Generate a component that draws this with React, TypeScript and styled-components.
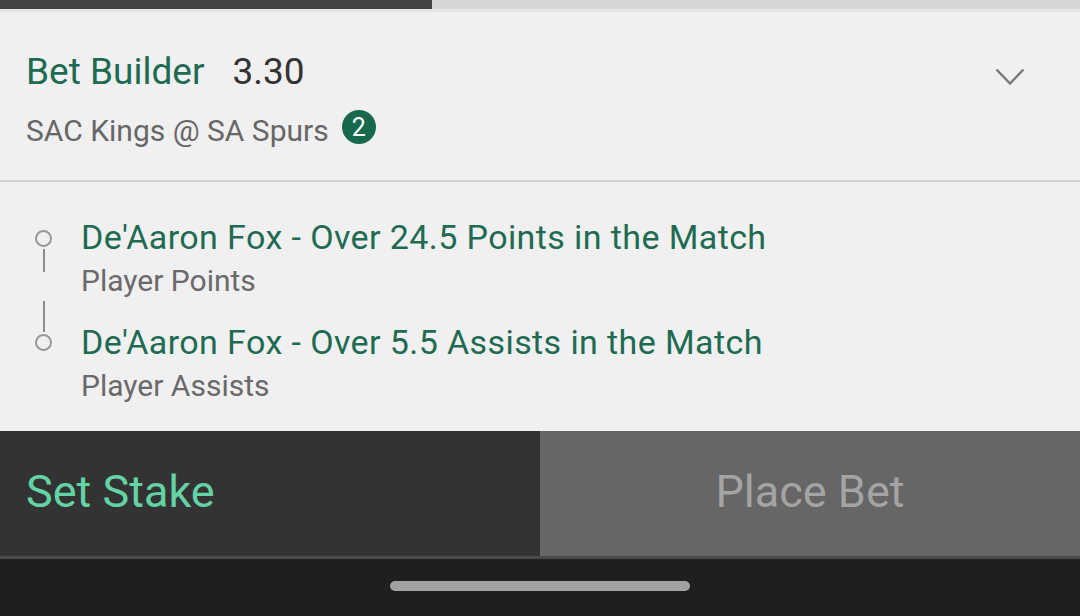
import React from 'react'
import styled, { createGlobalStyle } from 'styled-components'

const GlobalStyle = createGlobalStyle`
    html, body {
        margin: 0;
        padding: 0;
        background: #f0f0f0;
        font-family: Roboto, 'Liberation Sans', sans-serif;
    }
`

const selections = [
    { title: "De'Aaron Fox - Over 24.5 Points in the Match", market: 'Player Points', connect: 'down' as const },
    { title: "De'Aaron Fox - Over 5.5 Assists in the Match", market: 'Player Assists', connect: 'up' as const }
]

export default function App() {
    return (
        <Page>
            <GlobalStyle />
            <ProgressTrack>
                <ProgressFill style={{ width: '40%' }} />
            </ProgressTrack>
            <Header>
                <HeaderInfo>
                    <TitleRow>
                        <BetTitle>Bet Builder</BetTitle>
                        <Odds>3.30</Odds>
                    </TitleRow>
                    <EventRow>
                        <EventName>SAC Kings @ SA Spurs</EventName>
                        <CountBadge>2</CountBadge>
                    </EventRow>
                </HeaderInfo>
                <Chevron viewBox="0 0 30 18" aria-hidden>
                    <polyline points="1.5,1.5 15,15.5 28.5,1.5" />
                </Chevron>
            </Header>
            <SelectionList>
                {selections.map((s) => (
                    <SelectionItem key={s.title}>
                        <Marker $connect={s.connect}>
                            {s.connect === 'up' && <MarkerLine $length={31} />}
                            <MarkerDot />
                            {s.connect === 'down' && <MarkerLine $length={23} />}
                        </Marker>
                        <SelectionText>
                            <SelectionTitle>{s.title}</SelectionTitle>
                            <SelectionMarket>{s.market}</SelectionMarket>
                        </SelectionText>
                    </SelectionItem>
                ))}
            </SelectionList>
            <ActionBar>
                <StakeButton>Set Stake</StakeButton>
                <PlaceButton>Place Bet</PlaceButton>
            </ActionBar>
            <NavBar>
                <HomePill />
            </NavBar>
        </Page>
    )
}

const Page = styled.div`
    width: 1080px;
    height: 616px;
    display: flex;
    flex-direction: column;
    background: #f0f0f0;
    overflow: hidden;
`
const ProgressTrack = styled.div`
    height: 9px;
    background: #d6d6d6;
    display: flex;
    border-bottom: 3px solid #e6e6e6;
`
const ProgressFill = styled.div`
    height: 100%;
    background: #454545;
`
const Header = styled.header`
    display: flex;
    justify-content: space-between;
    align-items: flex-start;
    padding: 38px 55px 31px 26px;
    border-bottom: 2px solid #d0d0d0;
`
const HeaderInfo = styled.div`
    display: flex;
    flex-direction: column;
    gap: 19px;
`
const TitleRow = styled.div`
    display: flex;
    align-items: baseline;
    gap: 28px;
    line-height: 44px;
`
const BetTitle = styled.span`
    font-size: 37px;
    color: #1e6b51;
`
const Odds = styled.span`
    font-size: 37px;
    color: #333333;
`
const EventRow = styled.div`
    display: flex;
    align-items: flex-start;
    gap: 13px;
    line-height: 36px;
`
const EventName = styled.span`
    font-size: 30px;
    color: #676767;
`
const CountBadge = styled.span`
    width: 34px;
    height: 34px;
    border-radius: 50%;
    background: #17684d;
    color: #ffffff;
    font-size: 25px;
    line-height: 1;
    display: flex;
    align-items: center;
    justify-content: center;
    margin-top: -3px;
`
const Chevron = styled.svg`
    width: 30px;
    height: 18px;
    margin-top: 18px;
    fill: none;
    stroke: #7a7a7a;
    stroke-width: 2.5;
`
const SelectionList = styled.section`
    flex: 1;
    display: flex;
    flex-direction: column;
    gap: 25px;
    padding: 36px 0 0 35px;
`
const SelectionItem = styled.div`
    display: flex;
    align-items: flex-start;
    gap: 29px;
`
const Marker = styled.div<{ $connect: 'up' | 'down' }>`
    width: 17px;
    display: flex;
    flex-direction: column;
    align-items: center;
    gap: 2px;
    margin-top: ${(p) => (p.$connect === 'down' ? '12px' : '-22px')};
`
const MarkerLine = styled.div<{ $length: number }>`
    width: 2px;
    height: ${(p) => p.$length}px;
    background: #8c8c8c;
`
const MarkerDot = styled.div`
    width: 13px;
    height: 13px;
    border: 2px solid #979797;
    border-radius: 50%;
`
const SelectionText = styled.div`
    display: flex;
    flex-direction: column;
    gap: 8px;
`
const SelectionTitle = styled.div`
    font-size: 34px;
    line-height: 38px;
    letter-spacing: 0.4px;
    color: #1e6b51;
`
const SelectionMarket = styled.div`
    font-size: 30px;
    line-height: 34px;
    color: #6a6a6a;
`
const ActionBar = styled.div`
    display: grid;
    grid-template-columns: 1fr 1fr;
    height: 125px;
    border-bottom: 3px solid #4a4a4a;
`
const StakeButton = styled.button`
    border: none;
    margin: 0;
    background: #333333;
    color: #63d3a6;
    font-family: Roboto, 'Liberation Sans', sans-serif;
    font-size: 45px;
    text-align: left;
    padding: 0 0 4px 26px;
`
const PlaceButton = styled.button`
    border: none;
    margin: 0;
    background: #666666;
    color: #a4a4a4;
    font-family: Roboto, 'Liberation Sans', sans-serif;
    font-size: 45px;
    text-align: center;
    padding: 0 0 4px 0;
`
const NavBar = styled.div`
    height: 57px;
    background: #1f1f1f;
    display: flex;
    justify-content: center;
    padding-top: 22px;
    box-sizing: border-box;
`
const HomePill = styled.div`
    width: 300px;
    height: 10px;
    border-radius: 5px;
    background: #a2a2a2;
`
